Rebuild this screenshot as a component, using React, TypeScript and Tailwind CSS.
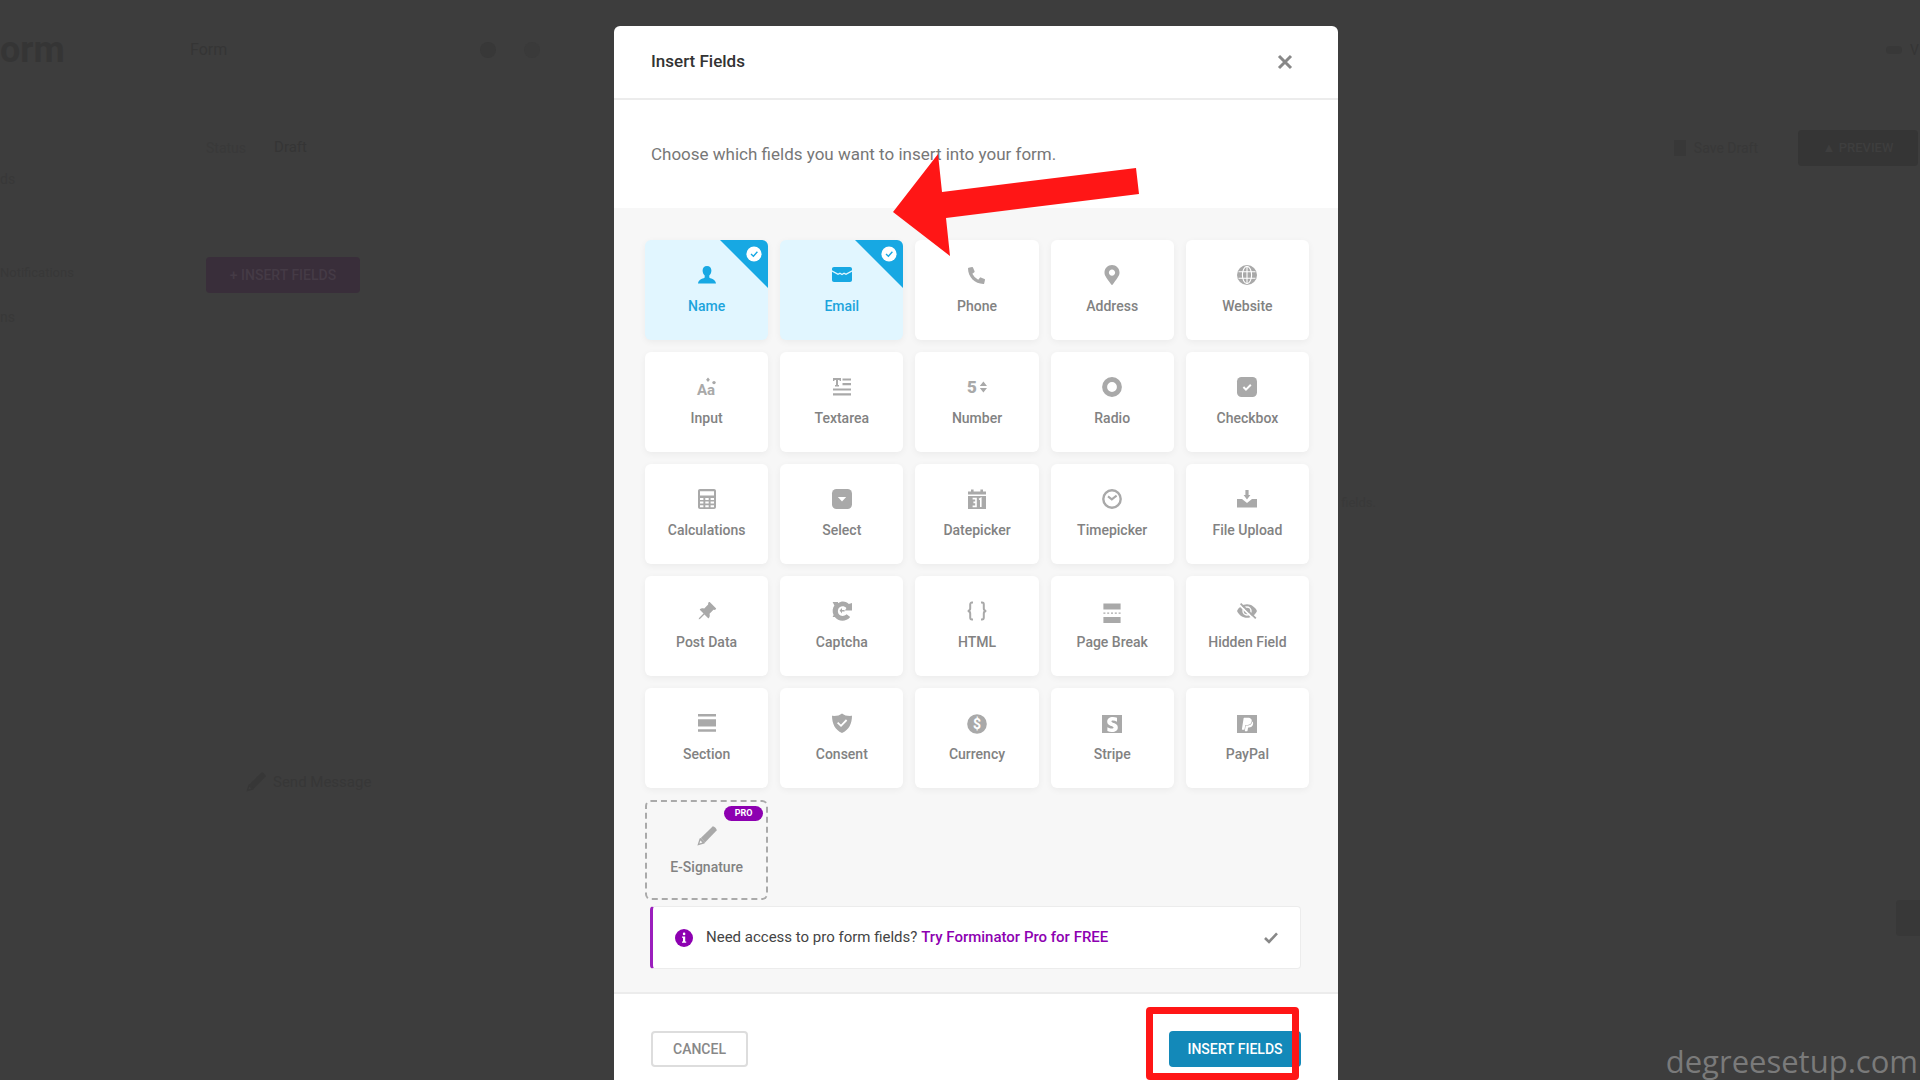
import { useState } from 'react';
import type { ReactNode } from 'react';
import { FaMapMarkerAlt, FaPaypal, FaPhoneAlt, FaStripeS } from 'react-icons/fa';
import { BsPinAngleFill } from 'react-icons/bs';

interface Field {
  label: string;
  icon: ReactNode;
}

function Glyph({ children }: { children: ReactNode }) {
  return (
    <svg className="w-5 h-5 overflow-visible" viewBox="0 0 20 20" fill="currentColor" aria-hidden="true">
      {children}
    </svg>
  );
}

const PencilIcon = () => (
  <Glyph>
    <path d="M15.6 0.4C16.6 -0.2 20.2 3.2 19.6 4.4L8 16.4L3.8 12Z" />
    <path
      fillRule="evenodd"
      d="M2.6 12.4L3.8 12L8 16.4L7.4 17.4L0.4 19.6ZM3.4 14.6L2.4 17.6L5.4 16.6Z"
    />
  </Glyph>
);

const FIELDS: Field[] = [
  {
    label: 'Name',
    icon: (
      <Glyph>
        <path d="M10 1C12.8 1 14.4 3 14.4 5.6C14.4 7.8 13.5 9.6 12.3 10.5V12.4C12.3 13.2 18.8 13.8 19 18.4H1C1.2 13.8 7.7 13.2 7.7 12.4V10.5C6.5 9.6 5.6 7.8 5.6 5.6C5.6 3 7.2 1 10 1Z" />
      </Glyph>
    ),
  },
  {
    label: 'Email',
    icon: (
      <Glyph>
        <path d="M2 2H18C19.2 2 20 2.8 20 4V5.2L14 8.4L12 7.4L10 8.8L8 7.4L6 8.4L0 5.2V4C0 2.8 0.8 2 2 2Z" />
        <path d="M0 6.8L6 9.9L8 8.9L10 10.3L12 8.9L14 9.9L20 6.8V15C20 16.2 19.2 17 18 17H2C0.8 17 0 16.2 0 15Z" />
      </Glyph>
    ),
  },
  { label: 'Phone', icon: <FaPhoneAlt className="w-[17px] h-[17px]" /> },
  { label: 'Address', icon: <FaMapMarkerAlt className="w-5 h-5" /> },
  {
    label: 'Website',
    icon: (
      <Glyph>
        <circle cx="10" cy="10" r="10" />
        <g fill="none" stroke="white" strokeWidth="1.1">
          <path d="M1.5 6.8H18.5M1.5 13.2H18.5M10 1.5V18.5" />
          <ellipse cx="10" cy="10" rx="4.6" ry="8.6" />
        </g>
      </Glyph>
    ),
  },
  {
    label: 'Input',
    icon: (
      <Glyph>
        <text x="0" y="18" fontSize="15" fontWeight="700" fontFamily="Roboto, sans-serif">
          Aa
        </text>
        <path d="M11 0.6L12.9 2.8L11 5L9.1 2.8Z" />
        <circle cx="17" cy="5.6" r="1.7" />
      </Glyph>
    ),
  },
  {
    label: 'Textarea',
    icon: (
      <Glyph>
        <path d="M1 1H9V4H7.6V3H6V8H7V9.4H3V8H4V3H2.4V4H1ZM10.5 1.4H19V3.6H10.5ZM10.5 6H19V8.2H10.5ZM1 11.4H19V13.6H1ZM1 16.2H19V18.4H1Z" />
      </Glyph>
    ),
  },
  {
    label: 'Number',
    icon: (
      <Glyph>
        <text x="0" y="16" fontSize="17" fontWeight="900" fontFamily="Roboto, sans-serif">
          5
        </text>
        <path d="M16.4 4.6L20 9H12.8ZM16.4 15.4L12.8 11H20Z" />
      </Glyph>
    ),
  },
  {
    label: 'Radio',
    icon: (
      <Glyph>
        <circle cx="10" cy="10" r="7.4" fill="none" stroke="currentColor" strokeWidth="5" />
      </Glyph>
    ),
  },
  {
    label: 'Checkbox',
    icon: (
      <Glyph>
        <rect width="20" height="20" rx="4.5" />
        <path d="M6.4 10L9 12.6L13.8 7.8" fill="none" stroke="white" strokeWidth="2" />
      </Glyph>
    ),
  },
  {
    label: 'Calculations',
    icon: (
      <Glyph>
        <path
          fillRule="evenodd"
          d="M3 0H17C18.2 0 19 0.8 19 2V18C19 19.2 18.2 20 17 20H3C1.8 20 1 19.2 1 18V2C1 0.8 1.8 0 3 0ZM3 2.2V6.6H17V2.2ZM3 9V11H6.4V9ZM8.3 9V11H11.7V9ZM13.6 9V11H17V9ZM3 12.6V14.6H6.4V12.6ZM8.3 12.6V14.6H11.7V12.6ZM13.6 12.6V14.6H17V12.6ZM3 16.2V18.2H6.4V16.2ZM8.3 16.2V18.2H11.7V16.2ZM13.6 16.2V18.2H17V16.2Z"
        />
      </Glyph>
    ),
  },
  {
    label: 'Select',
    icon: (
      <Glyph>
        <rect width="20" height="20" rx="4.5" />
        <path d="M5.8 8H14.2L10 12.6Z" fill="white" />
      </Glyph>
    ),
  },
  {
    label: 'Datepicker',
    icon: (
      <Glyph>
        <path d="M1 2.4H4V0.6H6.6V2.4H13.4V0.6H16V2.4H19V5.6H1ZM1 7H19V20H1Z" />
        <path
          d="M5.6 9.6H9V17.4H5.6M6.4 13.4H9M12 10.4L13.8 9.4V18"
          fill="none"
          stroke="white"
          strokeWidth="1.6"
        />
      </Glyph>
    ),
  },
  {
    label: 'Timepicker',
    icon: (
      <Glyph>
        <circle cx="10" cy="10" r="8.7" fill="none" stroke="currentColor" strokeWidth="2.4" />
        <path d="M6 7.4L9.8 10.4L14.6 6.6" fill="none" stroke="currentColor" strokeWidth="2" />
      </Glyph>
    ),
  },
  {
    label: 'File Upload',
    icon: (
      <Glyph>
        <path d="M8.4 1H11.6V6H13.4L10 10.4L6.6 6H8.4Z" />
        <path d="M0 10H5L10 14L15 10H20V18.6H0Z" />
      </Glyph>
    ),
  },
  { label: 'Post Data', icon: <BsPinAngleFill className="w-5 h-5" /> },
  {
    label: 'Captcha',
    icon: (
      <Glyph>
        <path d="M0.6 1H6V2.2C10 -0.6 14.6 0.6 16.8 3L20 2V9.4H13L14.4 7C12 4.4 7 4.6 6 9C5 14 10.6 17 14.6 13.2L18.2 16C14 21.4 6 20.6 2.8 16H0.6L1.6 14C0 10.4 0.6 6.6 2.4 4.4Z" />
        <path d="M7.6 9.4L10 7V9H12.6V10.6H10V12.4Z" />
      </Glyph>
    ),
  },
  {
    label: 'HTML',
    icon: (
      <Glyph>
        <path
          d="M6 1.6H5C3.8 1.6 3.2 2.4 3.2 3.4V7.6C3.2 8.8 2.4 9.8 0.8 10C2.4 10.2 3.2 11.2 3.2 12.4V16.4C3.2 17.6 3.8 18.4 5 18.4H6M14 1.6H15C16.2 1.6 16.8 2.4 16.8 3.4V7.6C16.8 8.8 17.6 9.8 19.2 10C17.6 10.2 16.8 11.2 16.8 12.4V16.4C16.8 17.6 16.2 18.4 15 18.4H14"
          fill="none"
          stroke="currentColor"
          strokeWidth="2"
        />
      </Glyph>
    ),
  },
  {
    label: 'Page Break',
    icon: (
      <Glyph>
        <path d="M1.4 2.4H18.6V8.4H1.4ZM1.4 16H18.6V22H1.4ZM1.4 11.4H3.4V12.8H1.4ZM5.2 11.4H7.2V12.8H5.2ZM9 11.4H11V12.8H9ZM12.8 11.4H14.8V12.8H12.8ZM16.6 11.4H18.6V12.8H16.6Z" />
      </Glyph>
    ),
  },
  {
    label: 'Hidden Field',
    icon: (
      <Glyph>
        <path d="M0 10C2 6 5.6 3.2 10 3.2C14.4 3.2 18 6 20 10C18 14 14.4 16.8 10 16.8C5.6 16.8 2 14 0 10Z" />
        <circle cx="10" cy="10" r="4" fill="none" stroke="white" strokeWidth="1.4" />
        <path d="M2.4 4L17.4 18.6" stroke="white" strokeWidth="1.8" />
        <path d="M3.6 2.6L18.8 17.4" stroke="currentColor" strokeWidth="1.8" />
      </Glyph>
    ),
  },
  {
    label: 'Section',
    icon: (
      <Glyph>
        <path d="M1 1H19V3.6H1ZM1 6.2H19V13.6H1ZM1 16.2H19V18.8H1Z" />
      </Glyph>
    ),
  },
  {
    label: 'Consent',
    icon: (
      <Glyph>
        <path d="M10 0.4C12.4 2.4 16 3.2 20 2.8C20 10.6 17 17 10 20C3 17 0 10.6 0 2.8C4 3.2 7.6 2.4 10 0.4Z" />
        <path d="M5.6 9.6L9 12.8L14.6 7" fill="none" stroke="white" strokeWidth="1.8" />
      </Glyph>
    ),
  },
  {
    label: 'Currency',
    icon: (
      <Glyph>
        <circle cx="10" cy="11" r="9.8" />
        <text
          x="10"
          y="16"
          fill="white"
          fontSize="14"
          fontWeight="700"
          textAnchor="middle"
          fontFamily="Roboto, sans-serif"
        >
          $
        </text>
      </Glyph>
    ),
  },
  {
    label: 'Stripe',
    icon: (
      <span className="w-5 h-[18px] mt-[2px] bg-[#a9a9a9] flex items-center justify-center">
        <FaStripeS className="w-[15px] h-[15px] text-white" />
      </span>
    ),
  },
  {
    label: 'PayPal',
    icon: (
      <span className="w-5 h-[18px] mt-[2px] bg-[#a9a9a9] flex items-center justify-center">
        <FaPaypal className="w-[15px] h-[15px] text-white" />
      </span>
    ),
  },
];

function FieldCard({ field, checked, onToggle }: { field: Field; checked: boolean; onToggle: () => void }) {
  return (
    <label
      className={`relative h-[100px] rounded-md overflow-hidden flex flex-col items-center pt-[25px] gap-[9px] cursor-pointer shadow-[0_2px_7px_rgba(0,0,0,0.05)] ${
        checked ? 'bg-[#e1f6ff]' : 'bg-white'
      }`}
    >
      <input type="checkbox" className="sr-only" checked={checked} onChange={onToggle} />
      <span className={`h-5 flex items-center justify-center ${checked ? 'text-[#17a8e3]' : 'text-[#a9a9a9]'}`}>
        {field.icon}
      </span>
      <span className={`text-sm leading-6 font-medium ${checked ? 'text-[#1da4dc]' : 'text-[#828282]'}`}>
        {field.label}
      </span>
      {checked && (
        <svg className="absolute top-0 right-0 w-12 h-12" viewBox="0 0 48 48" aria-hidden="true">
          <path d="M0 0H48V48Z" fill="#17a8e3" />
          <circle cx="34" cy="14" r="7.6" fill="white" />
          <path d="M31 14L33.4 16.2L37.4 11.8" fill="none" stroke="#17a8e3" strokeWidth="1.4" />
        </svg>
      )}
    </label>
  );
}

// Form builder page, darkened behind the modal
function Builder() {
  return (
    <div className="min-h-screen flex flex-col bg-[#3d3d3d] text-[#353535] text-base">
      <header className="h-[100px] flex items-center">
        <div className="w-[190px] text-4xl font-bold">orm</div>
        <div className="w-[290px]">Form</div>
        <div className="flex-1 flex gap-7">
          <span className="w-4 h-4 rounded-full bg-[#383838]" />
          <span className="w-4 h-4 rounded-full bg-[#3a3a3a]" />
        </div>
        <div className="w-[34px] flex items-center gap-2">
          <span className="w-4 h-2 rounded-full bg-[#383838]" />
          <span className="text-sm">V</span>
        </div>
      </header>
      <div className="flex flex-1">
        <nav className="w-[206px] pt-[67px] flex flex-col text-sm leading-6 text-[#383838]">
          <a href="#fields">ds</a>
          <a href="#notifications" className="mt-[70px] text-[13px]">Notifications</a>
          <a href="#integrations" className="mt-5">ns</a>
        </nav>
        <main className="flex-1 flex flex-col">
          <div className="h-24 flex items-center text-sm">
            <span className="text-[#393939]">Status</span>
            <span className="ml-7 text-[15px]">Draft</span>
            <span className="flex-1" />
            <span className="w-3 h-4 bg-[#383838]" />
            <span className="ml-2 text-[#383838]">Save Draft</span>
            <button className="ml-10 mr-[2px] h-9 w-[120px] rounded bg-[#353535] text-[#3e3e3e] text-[13px] font-medium">
              ▲ PREVIEW
            </button>
          </div>
          <button className="mt-[61px] h-9 w-[154px] rounded bg-[#392e3a] text-[#453b46] text-sm font-medium">
            + INSERT FIELDS
          </button>
          <p className="mt-[200px] w-[1170px] text-right text-[13px] leading-5 text-[#393939]">fields.</p>
          <div className="mt-[258px] ml-10 flex items-center gap-[7px] text-[#373737]">
            <PencilIcon />
            <span className="text-[15px]">Send Message</span>
          </div>
          <div className="mt-[106px] self-end w-6 h-9 rounded-l bg-[#383838]" />
        </main>
      </div>
    </div>
  );
}

export default function App() {
  const [selected, setSelected] = useState<string[]>(['Name', 'Email']);

  const toggle = (label: string) => {
    setSelected(selected.includes(label) ? selected.filter(l => l !== label) : [...selected, label]);
  };

  return (
    <div className="relative h-screen overflow-hidden font-['Roboto',sans-serif]">
      <Builder />

      <div className="absolute inset-0 flex items-start justify-center pl-12 pr-4 pt-[26px]">
        <div
          role="dialog"
          aria-labelledby="insert-fields-title"
          className="relative w-full max-w-[724px] bg-white rounded-md"
        >
          <div className="h-[74px] px-[37px] flex items-center justify-between border-b-2 border-[#ececec]">
            <h2 id="insert-fields-title" className="text-[17px] font-medium text-[#333]">Insert Fields</h2>
            <button aria-label="Close" className="w-8 h-8 flex items-center justify-center text-[#888]">
              <svg className="w-4 h-4" viewBox="0 0 16 16" fill="none">
                <path d="M2 2L14 14M14 2L2 14" stroke="currentColor" strokeWidth="3" />
              </svg>
            </button>
          </div>

          <p className="h-[108px] px-[37px] pt-[2px] flex items-center text-[17px] text-[#777]">
            Choose which fields you want to insert into your form.
          </p>

          <div className="bg-[#f7f7f7] pl-[31px] pr-[29px] pt-8 pb-[23px] border-b-2 border-[#ececec]">
            <div className="grid grid-cols-5 gap-3">
              {FIELDS.map(field => (
                <FieldCard
                  key={field.label}
                  field={field}
                  checked={selected.includes(field.label)}
                  onToggle={() => toggle(field.label)}
                />
              ))}
              <button className="relative h-[100px] rounded-md border-2 border-dashed border-[#aaa] flex flex-col items-center pt-6 gap-[9px]">
                <span className="text-[#a9a9a9]">
                  <PencilIcon />
                </span>
                <span className="text-sm leading-6 font-medium text-[#828282]">E-Signature</span>
                <span className="absolute top-1 right-[3px] w-[39px] h-[15px] rounded-full bg-[#8d00b1] text-white text-[9px] leading-[15px] font-bold">
                  PRO
                </span>
              </button>
            </div>

            <div className="mt-[6px] ml-[5px] mr-2 h-[63px] px-[22px] flex items-center bg-white rounded border border-l-[3px] border-[#ececec] border-l-[#9b1fbd]">
              <svg className="w-[18px] h-[18px] mr-[13px]" viewBox="0 0 18 18" aria-hidden="true">
                <circle cx="9" cy="9" r="9" fill="#8d00b1" />
                <path d="M7 7.4H10.2V12.4H11.2V13.8H7V12.4H8V8.8H7Z" fill="white" />
                <circle cx="9.1" cy="4.9" r="1.3" fill="white" />
              </svg>
              <p className="flex-1 text-[15px] text-[#444]">
                Need access to pro form fields?{' '}
                <a href="#pro" className="font-medium text-[#8d00b1]">Try Forminator Pro for FREE</a>
              </p>
              <button aria-label="Dismiss" className="text-[#888]">
                <svg className="w-[14px] h-[14px]" viewBox="0 0 14 14" fill="none">
                  <path d="M1 7L5 11L13 2.4" stroke="currentColor" strokeWidth="2.6" />
                </svg>
              </button>
            </div>
          </div>

          <div className="px-[37px] pt-[37px] pb-9 flex items-center justify-between">
            <button className="w-[97px] h-9 rounded border-2 border-[#ddd] text-sm font-medium text-[#888]">
              CANCEL
            </button>
            <div className="relative">
              <button className="w-[132px] h-9 rounded bg-[#1389b9] text-sm font-medium text-white">
                INSERT FIELDS
              </button>
              {/* highlight around the submit button */}
              <span className="absolute -left-[23px] -top-6 w-[153px] h-[73px] border-[7px] border-[#ff1616] rounded-sm pointer-events-none" />
            </div>
          </div>

          <svg
            className="absolute left-[279px] top-32 w-[246px] h-[103px] pointer-events-none"
            viewBox="0 0 246 103"
            aria-hidden="true"
          >
            <path d="M0 58L45 0L49 38L243 14L246 40L53 64L57 102Z" fill="#ff1616" />
          </svg>
        </div>
      </div>

      <div className="absolute right-[2px] bottom-0 text-[31px] leading-[38px] text-[#7a7a7a] font-['Open_Sans',sans-serif]">
        degreesetup.com
      </div>
    </div>
  );
}
